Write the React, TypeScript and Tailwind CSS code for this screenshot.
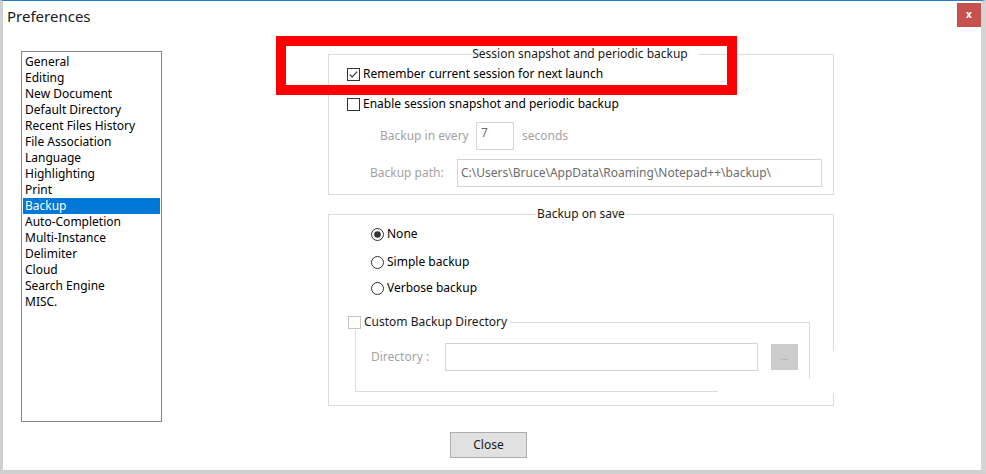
import React from 'react';

const items = [
  'General',
  'Editing',
  'New Document',
  'Default Directory',
  'Recent Files History',
  'File Association',
  'Language',
  'Highlighting',
  'Print',
  'Backup',
  'Auto-Completion',
  'Multi-Instance',
  'Delimiter',
  'Cloud',
  'Search Engine',
  'MISC.',
];

function CheckBox({ checked, disabled }: { checked?: boolean; disabled?: boolean }) {
  const stroke = disabled ? '#c4c4c4' : '#333333';
  return (
    <svg width="13" height="13" viewBox="0 0 13 13" className="shrink-0">
      <rect x="0.5" y="0.5" width="12" height="12" fill="white" stroke={stroke} />
      {checked && <path d="M2.8 6.6 L5.2 9 L10.2 3.6" fill="none" stroke="#333333" strokeWidth="1.2" />}
    </svg>
  );
}

function Radio({ checked }: { checked?: boolean }) {
  return (
    <svg width="13" height="13" viewBox="0 0 13 13" className="shrink-0">
      <circle cx="6.5" cy="6.5" r="6" fill="white" stroke="#333333" />
      {checked && <circle cx="6.5" cy="6.5" r="3.3" fill="#333333" />}
    </svg>
  );
}

export default function App() {
  return (
    <div
      className="w-[986px] h-[474px] flex flex-col bg-white border-t border-t-[#2b7bc4] border-l-[3px] border-l-[#d0d0d0] border-r-[5px] border-r-[#d4d4d4] border-b-[4px] border-b-[#cfcfcf] text-[12px] leading-[16px] text-black overflow-hidden"
      style={{ fontFamily: '"Noto Sans", "Open Sans", sans-serif' }}
    >
      {/* title bar */}
      <div className="h-[30px] flex items-start justify-between">
        <div className="pl-[4px] h-[30px] flex items-center text-[15px] text-[#1a1a1a]">Preferences</div>
        <div className="mt-[2px] w-[24px] h-[24px] bg-[#c75050] flex items-center justify-center text-white text-[10px] font-bold leading-none pb-[2px]">
          x
        </div>
      </div>

      {/* body */}
      <div className="flex">
        <div className="ml-[18px] mt-[20px] w-[141px] h-[371px] border border-[#828790] px-[1px] pt-[2px]">
          {items.map((it) => (
            <div
              key={it}
              className={
                it === 'Backup'
                  ? 'h-[16px] pl-[2px] bg-[#0078d7] text-white whitespace-nowrap'
                  : 'h-[16px] pl-[2px] whitespace-nowrap'
              }
            >
              {it}
            </div>
          ))}
        </div>

        <div className="ml-[166px] mt-[15px] w-[506px] flex flex-col">
          {/* group 1 */}
          <fieldset className="border border-[#dcdcdc] pl-[18px] pb-[6px] h-[149px]">
            <legend className="mx-auto px-[1px] h-[16px] leading-[16px] text-[#1a1a1a] relative left-[-10px]">
              Session snapshot and periodic backup
            </legend>
            <div className="mt-[4px] h-[16px] flex items-center gap-[3px]">
              <CheckBox checked />
              <span>Remember current session for next launch</span>
            </div>
            <div className="mt-[14px] h-[16px] flex items-center gap-[3px]">
              <CheckBox />
              <span>Enable session snapshot and periodic backup</span>
            </div>
            <div className="mt-[10px] ml-[33px] h-[28px] flex items-center text-[#a3a3a3]">
              <span className="w-[96px]">Backup in every</span>
              <div className="w-[38px] h-[28px] border border-[#d4d4d4] pl-[4px] pt-[2px] text-[#6d6d6d]">7</div>
              <span className="ml-[8px]">seconds</span>
            </div>
            <div className="mt-[9px] ml-[23px] h-[28px] flex items-center text-[#a3a3a3]">
              <span className="w-[87px]">Backup path:</span>
              <div className="w-[365px] h-[28px] border border-[#d4d4d4] pl-[3px] flex items-center text-[#6d6d6d] whitespace-nowrap">
                C:\Users\Bruce\AppData\Roaming\Notepad++\backup\
              </div>
            </div>
          </fieldset>

          {/* group 2 */}
          <fieldset className="relative mt-[11px] border border-[#dcdcdc] h-[200px]">
            <legend className="mx-auto px-[1px] h-[16px] leading-[16px] text-[#1a1a1a]">Backup on save</legend>
            <div className="ml-[42px] mt-[4px] h-[16px] flex items-center gap-[3px]">
              <Radio checked />
              <span>None</span>
            </div>
            <div className="ml-[42px] mt-[12px] h-[16px] flex items-center gap-[3px]">
              <Radio />
              <span>Simple backup</span>
            </div>
            <div className="ml-[42px] mt-[10px] h-[16px] flex items-center gap-[3px]">
              <Radio />
              <span>Verbose backup</span>
            </div>

            <div className="relative z-10 ml-[19px] mt-[18px] -mb-[8px] h-[16px] w-fit pr-[3px] bg-white flex items-center gap-[3px]">
              <CheckBox disabled />
              <span className="text-[#1a1a1a]">Custom Backup Directory</span>
            </div>
            <div className="relative z-[5] ml-[26px] w-[455px] h-[70px] border border-[#dcdcdc] pt-[20px] pl-[15px]">
              <div className="flex items-center h-[28px]">
                <span className="w-[74px] text-[#a3a3a3]">Directory :</span>
                <div className="w-[313px] h-[28px] border border-[#d4d4d4]" />
                <div className="ml-[13px] w-[27px] h-[26px] bg-[#cccccc] flex items-center justify-center text-[#999999] text-[9px] leading-none pb-[1px]">
                  ...
                </div>
              </div>
              <div className="absolute right-[-1px] bottom-[-1px] w-[92px] h-[13px] bg-white" />
            </div>
            <div className="absolute right-[-1px] bottom-[-1px] w-[127px] h-[42px] bg-white" />
          </fieldset>
        </div>
      </div>

      {/* footer */}
      <div className="mt-[10px] ml-[447px]">
        <div className="w-[77px] h-[26px] bg-[#e1e1e1] border border-[#adadad] flex items-center justify-center text-[#1a1a1a]">
          Close
        </div>
      </div>

      {/* highlight box drawn over the dialog */}
      <div className="absolute left-[276px] top-[36px] w-[461px] h-[59px] border-[10px] border-[#ff0000]" />
    </div>
  );
}
